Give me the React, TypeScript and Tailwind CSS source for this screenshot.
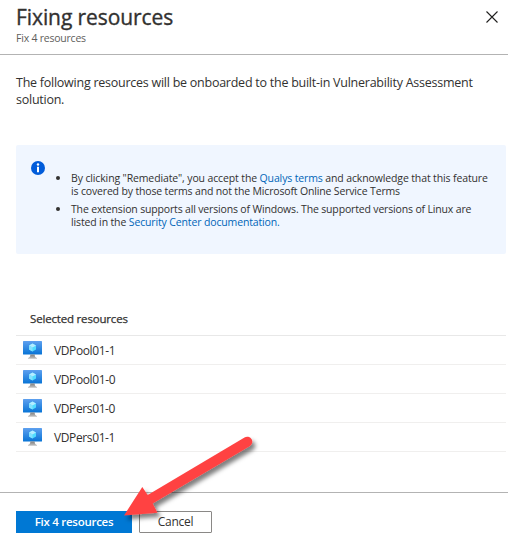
const resources = ["VDPool01-1", "VDPool01-0", "VDPers01-0", "VDPers01-1"];

function MachineIcon() {
  return (
    <svg width="20" height="19" viewBox="0 0 20 19" className="block shrink-0">
      <defs>
        <linearGradient id="screen" x1="0" y1="0" x2="0" y2="1">
          <stop offset="0" stopColor="#5ea0ef" />
          <stop offset="1" stopColor="#0874d6" />
        </linearGradient>
        <linearGradient id="stand" x1="0" y1="0" x2="0" y2="1">
          <stop offset="0" stopColor="#808080" />
          <stop offset="1" stopColor="#c4c4c4" />
        </linearGradient>
      </defs>
      <rect x="0" y="0" width="19" height="13.5" rx="0.6" fill="url(#screen)" />
      <path d="M9.5 2.5 13 4.5v4l-3.5 2L6 8.5v-4Z" fill="#50dcff" />
      <path d="M9.5 2.5 13 4.5 9.5 6.500 6 4.500Z" fill="#b4ecff" />
      <path d="M6 4.500 9.500 6.500v4L6 8.500Z" fill="#84e2ff" />
      <path d="M7.300 13.500h4.400c0 2 .5 3 2.300 3.500v.8H5V17c1.800-.5 2.300-1.500 2.300-3.500Z" fill="url(#stand)" />
    </svg>
  );
}

export default function App() {
  return (
    <div className="relative flex h-[538px] w-[508px] flex-col overflow-hidden bg-white font-['Open_Sans','Noto_Sans',sans-serif] text-[#323130]">
      <header className="flex h-[55px] shrink-0 justify-between border-b border-[#b3b3b3] pr-[10px] pl-4">
        <div className="whitespace-nowrap">
          <h1 className="mt-[3px] h-7 text-[21px] leading-7 tracking-[-0.08px] [-webkit-text-stroke:0.35px]">Fixing resources</h1>
          <p className="h-4 text-[10.5px] leading-[14px] tracking-[-0.22px] text-[#605e5c]">Fix 4 resources</p>
        </div>
        <svg width="12" height="12" viewBox="0 0 12 12" className="mt-[11px]">
          <path d="M.5.5l11 11M11.500.5l-11 11" stroke="#201f1e" strokeWidth="1.100" />
        </svg>
      </header>

      <p className="mt-[19px] ml-4 h-[34px] shrink-0 text-[12.5px] leading-[17px] tracking-[-0.25px] whitespace-nowrap">
        The following resources will be onboarded to the built-in Vulnerability Assessment
        <br />
        solution.
      </p>

      <section className="mt-[37px] ml-4 flex h-[109px] w-[490px] shrink-0 rounded-[2px] bg-[#f0f6ff] text-[10.5px] leading-[13px] whitespace-nowrap">
        <svg width="14" height="14" viewBox="0 0 14 14" className="mt-4 ml-[15px] shrink-0">
          <circle cx="7" cy="7" r="7" fill="#015cda" />
          <circle cx="7" cy="3.500" r="1.200" fill="#fff" />
          <path d="M6 5.700h2v5.500H6Z" fill="#fff" />
        </svg>
        <ul className="mt-[27px] ml-[11px]">
          <li className="flex">
            <span className="mt-1 mr-[11px] size-1 shrink-0 rounded-full bg-[#323130]" />
            <div>
              <div className="tracking-[-0.13px]">By clicking "Remediate", you accept the <a className="text-[#0065b8]">Qualys terms</a> and acknowledge that this feature</div>
              <div className="tracking-[-0.16px]">is covered by those terms and not the Microsoft Online Service Terms</div>
            </div>
          </li>
          <li className="mt-[5px] flex">
            <span className="mt-1 mr-[11px] size-1 shrink-0 rounded-full bg-[#323130]" />
            <div>
              <div className="tracking-[-0.165px]">The extension supports all versions of Windows. The supported versions of Linux are</div>
              <div className="tracking-[-0.14px]">listed in the <a className="text-[#0065b8]">Security Center documentation.</a></div>
            </div>
          </li>
        </ul>
      </section>

      <section className="mt-[47px] ml-4 w-[490px] shrink-0">
        <h2 className="h-[35px] border-b border-[#e8e8e8] pl-[14px] text-[11.5px] leading-[35px] tracking-[-0.18px] [-webkit-text-stroke:0.25px]">Selected resources</h2>
        {resources.map((name) => (
          <div key={name} className="flex h-[29px] border-b border-[#f0efee] pt-[5px] pl-[7px] text-[12px]">
            <MachineIcon />
            <span className="mt-[2px] ml-[11px] leading-[16px] tracking-[-0.38px]">{name}</span>
          </div>
        ))}
      </section>

      <footer className="mt-10 flex h-[46px] shrink-0 gap-[7px] border-t border-[#b3b3b3] pt-[18px] pl-4 leading-[20px]">
        <button className="h-[22px] w-[116px] bg-[#0078d4] text-[11.5px] font-semibold tracking-[-0.27px] text-white">Fix 4 resources</button>
        <button className="h-[22px] w-[73px] rounded-[1px] border border-[#8a8886] text-[12px] tracking-[-0.25px]">Cancel</button>
      </footer>

      <svg width="150" height="100" viewBox="115 430 150 100" className="absolute top-[430px] left-[115px]">
        <defs>
          <filter id="shade" x="-20%" y="-20%" width="150%" height="150%">
            <feDropShadow dx="3" dy="4" stdDeviation="2.200" floodColor="#000" floodOpacity="0.5" />
          </filter>
        </defs>
        <path d="M124 515.500 142.300 487 147.700 495 244.500 437.500A5 5 0 0 1 250 446L152.700 503.500 157.500 512.700Z" fill="#ff4343" filter="url(#shade)" />
      </svg>
    </div>
  );
}
